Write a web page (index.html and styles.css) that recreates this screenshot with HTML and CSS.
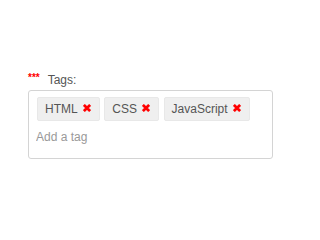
FILE: index.html
```html
<!DOCTYPE html>
<html>
<head>
<meta charset="utf-8">
<link rel="stylesheet" href="styles.css">
</head>
<body>
<div class="field">
  <label class="label"><span class="req">***</span>Tags:</label>
  <div class="tags-box">
    <div class="tag-list">
      <span class="tag">HTML<svg class="remove" width="8" height="8" viewBox="0 0 8 8"><path d="M0.9 0.9L7.1 7.1M7.1 0.9L0.9 7.1"/></svg></span>
      <span class="tag">CSS<svg class="remove" width="8" height="8" viewBox="0 0 8 8"><path d="M0.9 0.9L7.1 7.1M7.1 0.9L0.9 7.1"/></svg></span>
      <span class="tag">JavaScript<svg class="remove" width="8" height="8" viewBox="0 0 8 8"><path d="M0.9 0.9L7.1 7.1M7.1 0.9L0.9 7.1"/></svg></span>
    </div>
    <input class="tag-input" type="text" placeholder="Add a tag">
  </div>
</div>
</body>
</html>
```

FILE: styles.css
```css
html, body {
  margin: 0;
  padding: 0;
  background: #fff;
}
body {
  font-family: "Liberation Sans", Arial, Helvetica, sans-serif;
  font-size: 12px;
  color: #555;
}
.field {
  padding: 71px 0 0 28px;
  width: 245px;
}
.label {
  display: block;
  line-height: 14px;
  height: 14px;
  margin-bottom: 5px;
  color: #555;
}
.req {
  color: #f00;
  font-size: 10px;
  font-weight: bold;
  vertical-align: 3px;
  margin-right: 8px;
}
.tags-box {
  box-sizing: border-box;
  width: 245px;
  height: 69px;
  border: 1px solid #d4d4d4;
  border-radius: 3px;
  padding: 6px 8px 9px 8px;
  display: flex;
  flex-direction: column;
  gap: 4px;
}
.tag-list {
  display: flex;
  gap: 4.6px;
}
.tag {
  display: inline-flex;
  align-items: center;
  box-sizing: border-box;
  height: 24px;
  line-height: 24px;
  padding: 0 8px 0 7px;
  background: #efefef;
  border: 1px solid #e8e8e8;
  border-radius: 2px;
  color: #555;
}
.remove {
  display: block;
  margin-left: 5px;
  margin-bottom: 2px;
  stroke: #f00;
  stroke-width: 2.7;
  fill: none;
}
.tag-input {
  box-sizing: border-box;
  height: 24px;
  border: none;
  outline: none;
  padding: 0;
  margin: 0 0 0 -1px;
  font-family: inherit;
  font-size: 12px;
  color: #555;
  background: transparent;
}
.tag-input::placeholder {
  color: #999;
}
```
